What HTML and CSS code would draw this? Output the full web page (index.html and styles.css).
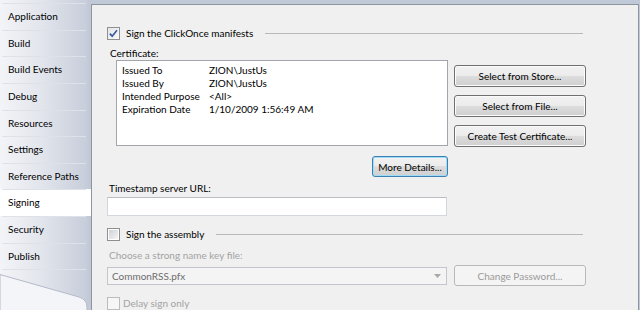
FILE: index.html
```html
<!DOCTYPE html>
<html lang="en">
<head>
    <meta charset="UTF-8">
    <meta name="viewport" content="width=device-width, initial-scale=1.0">
    <title>Project Properties - Signing</title>
    <link rel="stylesheet" href="styles.css">
</head>
<body>
    <div class="window">
        <nav class="tabs">
            <div class="tab">Application</div>
            <div class="tab">Build</div>
            <div class="tab">Build Events</div>
            <div class="tab">Debug</div>
            <div class="tab">Resources</div>
            <div class="tab">Settings</div>
            <div class="tab">Reference Paths</div>
            <div class="tab active">Signing</div>
            <div class="tab">Security</div>
            <div class="tab">Publish</div>
            <svg class="curl" width="91" height="44" viewBox="0 0 91 44">
                <line x1="2" y1="0.5" x2="86" y2="0.5" stroke="#dde1e8"/>
                <path d="M0 5.5 L79 28 Q87 30.5 87 38 L87 44 L0 44 Z" fill="#f4f5f8" stroke="#b3bac8"/>
            </svg>
        </nav>

        <main class="page">
            <div class="panel">
                <div class="content">
                    <div class="group">
                        <span class="check checked">
                            <svg width="11" height="11" viewBox="0 0 11 11"><path d="M1.8 5.6 L4.2 8.2 L9 2.2" fill="none" stroke="#3b5ba5" stroke-width="1.7"/></svg>
                        </span>
                        <span class="group-title">Sign the ClickOnce manifests</span>
                        <span class="rule"></span>
                    </div>

                    <div class="label cert-label">Certificate:</div>
                    <div class="cert-row">
                        <div class="cert-box">
                            <div class="cert-line"><span class="cert-key">Issued To</span><span>ZION\JustUs</span></div>
                            <div class="cert-line"><span class="cert-key">Issued By</span><span>ZION\JustUs</span></div>
                            <div class="cert-line"><span class="cert-key">Intended Purpose</span><span>&lt;All&gt;</span></div>
                            <div class="cert-line"><span class="cert-key">Expiration Date</span><span>1/10/2009 1:56:49 AM</span></div>
                        </div>
                        <div class="cert-buttons">
                            <button class="btn">Select from Store...</button>
                            <button class="btn">Select from File...</button>
                            <button class="btn">Create Test Certificate...</button>
                        </div>
                    </div>
                    <div class="details-row">
                        <button class="btn btn-default">More Details...</button>
                    </div>

                    <div class="label stamp-label">Timestamp server URL:</div>
                    <input class="textbox" type="text">

                    <div class="group group-assembly">
                        <span class="check"></span>
                        <span class="group-title">Sign the assembly</span>
                        <span class="rule"></span>
                    </div>

                    <div class="label key-label disabled">Choose a strong name key file:</div>
                    <div class="key-row">
                        <div class="combo">
                            <span>CommonRSS.pfx</span>
                            <svg width="7" height="4" viewBox="0 0 7 4"><path d="M0 0 H7 L3.5 4 Z" fill="#a8a8a8"/></svg>
                        </div>
                        <button class="btn" disabled>Change Password...</button>
                    </div>

                    <div class="delay-row">
                        <span class="check check-disabled"></span>
                        <span class="disabled">Delay sign only</span>
                    </div>
                </div>
            </div>
        </main>
    </div>
</body>
</html>
```

FILE: styles.css
```css
/* Project designer, Signing page */
body {
    margin: 0;
    font-family: Lato, "Noto Sans", sans-serif;
    font-size: 10px;
    color: #000;
    overflow: hidden;
}

.window {
    display: flex;
    width: 640px;
    height: 310px;
    overflow: hidden;
}

/* left tab strip */
.tabs {
    width: 91px;
    padding-top: 3px;
    background: linear-gradient(to right, #f3f4f7 0%, #e2e5ec 45%, #c9cfdb 92%, #c1c8d6 100%);
    flex-shrink: 0;
}

.tab {
    height: 26.65px;
    line-height: 27px;
    padding-left: 8px;
    box-sizing: border-box;
    background: linear-gradient(#dde1e8, #dde1e8) no-repeat 2px 0 / 84px 1px;
    white-space: nowrap;
}

.tab.active {
    background-color: #fff;
}

.curl {
    display: block;
}

/* right page */
.page {
    flex: 1;
    padding: 4px 1px 0 0;
    background: #c0c9d8;
}

.panel {
    height: 100%;
    box-sizing: border-box;
    background: #f0f0f0;
    border: 1px solid #8f959e;
    border-bottom: none;
    padding: 20px 0 0 15px;
}

.content {
    width: 479px;
}

.group {
    display: flex;
    align-items: center;
    height: 16px;
}

.group-title {
    margin-left: 6px;
}

.rule {
    flex: 1;
    margin: 0 3px 0 12px;
    border-top: 1px solid #b9b9b9;
}

.check {
    width: 13px;
    height: 13px;
    box-sizing: border-box;
    border: 1px solid #8e8f8f;
    padding: 1px;
    background: linear-gradient(135deg, #cfd2d7, #f4f4f4) content-box, #fff;
    display: flex;
    align-items: center;
    justify-content: center;
    flex-shrink: 0;
}

.check.checked {
    padding: 0;
    background: linear-gradient(135deg, #e3e5e8, #fafafa);
}

.check-disabled {
    border-color: #bcbcbc;
    background: #f6f6f6;
}

.label {
    line-height: 14px;
}

.cert-label {
    margin: 5px 0 0 3px;
}

.cert-row {
    display: flex;
    margin-left: 9px;
}

.cert-box {
    width: 332px;
    height: 86px;
    box-sizing: border-box;
    border: 1px solid #a2a5aa;
    background: #fff;
    padding: 3px 0 0 5px;
}

.cert-line {
    display: flex;
    line-height: 13px;
    white-space: nowrap;
}

.cert-key {
    width: 87px;
}

.cert-buttons {
    display: flex;
    flex-direction: column;
    gap: 8px;
    width: 132px;
    margin-left: 6px;
    padding-top: 5px;
}

.btn {
    height: 22px;
    padding: 0;
    font-family: inherit;
    font-size: 10px;
    color: #000;
    white-space: nowrap;
    border: 1px solid #707070;
    border-radius: 3px;
    background: linear-gradient(#f2f2f2 0%, #ebebeb 50%, #dddddd 50%, #cfcfcf 100%);
    box-shadow: inset 0 0 0 1px #fbfbfb;
}

.btn-default {
    width: 76px;
    height: 21px;
    border-color: #3c7fb1;
    box-shadow: inset 0 0 0 1px #9fdcf7;
}

.btn:disabled {
    color: #9a9a9a;
    border-color: #b6b9bc;
    background: #f4f4f4;
    box-shadow: none;
}

.details-row {
    width: 332px;
    margin: 9px 0 0 9px;
    display: flex;
    justify-content: flex-end;
}

.stamp-label {
    margin: 4px 0 0 2px;
}

.textbox {
    display: block;
    width: 340px;
    height: 19px;
    box-sizing: border-box;
    margin: 2px 0 0;
    border: 1px solid #d3d6db;
    border-top-color: #b9bcc1;
    background: #fff;
}

.group-assembly {
    margin-top: 10px;
}

.disabled {
    color: #a3a3a3;
}

.key-label {
    margin: 6px 0 0 2px;
}

.key-row {
    display: flex;
    align-items: center;
    gap: 7px;
    margin-top: 3px;
}

.key-row .btn {
    width: 132px;
    height: 21px;
}

.combo {
    width: 340px;
    height: 18px;
    box-sizing: border-box;
    border: 1px solid #c3c6ca;
    background: #f4f4f4;
    display: flex;
    align-items: center;
    justify-content: space-between;
    padding: 0 5px 0 4px;
    color: #6d6d6d;
}

.delay-row {
    display: flex;
    align-items: center;
    gap: 3px;
    height: 16px;
    margin-top: 9px;
}
```
